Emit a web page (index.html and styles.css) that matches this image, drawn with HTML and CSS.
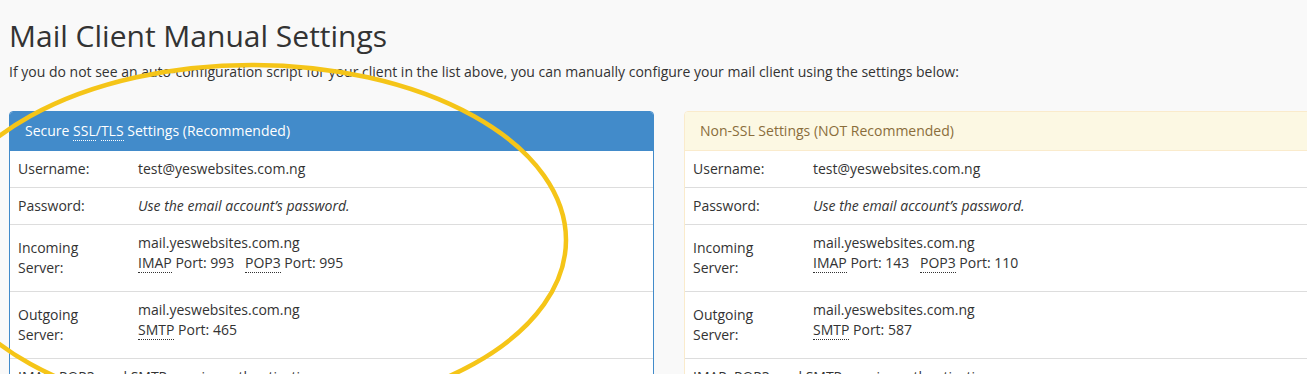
FILE: index.html
```html
<!DOCTYPE html>
<html lang="en">
<head>
    <meta charset="UTF-8">
    <title>Mail Client Manual Settings</title>
    <link rel="stylesheet" href="styles.css">
</head>
<body>
    <div class="page">
        <h1>Mail Client Manual Settings</h1>
        <p class="intro">If you do not see an auto-configuration script for your client in the list above, you can manually configure your mail client using the settings below:</p>

        <div class="panels">
            <!-- SSL panel -->
            <div class="panel panel-primary">
                <div class="panel-heading">Secure <abbr title="Secure Sockets Layer">SSL</abbr>/<abbr title="Transport Layer Security">TLS</abbr> Settings (Recommended)</div>
                <table class="settings">
                    <tr>
                        <td class="label">Username:</td>
                        <td>test@yeswebsites.com.ng</td>
                    </tr>
                    <tr>
                        <td class="label">Password:</td>
                        <td><em>Use the email account’s password.</em></td>
                    </tr>
                    <tr>
                        <td class="label mid">Incoming<br>Server:</td>
                        <td>mail.yeswebsites.com.ng
                            <div class="ports"><abbr>IMAP</abbr> Port: 993 <span class="port-gap"><abbr>POP3</abbr> Port: 995</span></div>
                        </td>
                    </tr>
                    <tr>
                        <td class="label mid">Outgoing<br>Server:</td>
                        <td>mail.yeswebsites.com.ng
                            <div class="ports"><abbr>SMTP</abbr> Port: 465</div>
                        </td>
                    </tr>
                    <tr>
                        <td colspan="2"><abbr>IMAP</abbr>, <abbr>POP3</abbr>, and <abbr>SMTP</abbr> require authentication.</td>
                    </tr>
                </table>
            </div>

            <!-- Non-SSL panel -->
            <div class="panel panel-warning">
                <div class="panel-heading">Non-SSL Settings (NOT Recommended)</div>
                <table class="settings">
                    <tr>
                        <td class="label">Username:</td>
                        <td>test@yeswebsites.com.ng</td>
                    </tr>
                    <tr>
                        <td class="label">Password:</td>
                        <td><em>Use the email account’s password.</em></td>
                    </tr>
                    <tr>
                        <td class="label mid">Incoming<br>Server:</td>
                        <td>mail.yeswebsites.com.ng
                            <div class="ports"><abbr>IMAP</abbr> Port: 143 <span class="port-gap"><abbr>POP3</abbr> Port: 110</span></div>
                        </td>
                    </tr>
                    <tr>
                        <td class="label mid">Outgoing<br>Server:</td>
                        <td>mail.yeswebsites.com.ng
                            <div class="ports"><abbr>SMTP</abbr> Port: 587</div>
                        </td>
                    </tr>
                    <tr>
                        <td colspan="2"><abbr>IMAP</abbr>, <abbr>POP3</abbr>, and <abbr>SMTP</abbr> require authentication.</td>
                    </tr>
                </table>
            </div>
        </div>
    </div>

    <!-- hand drawn highlight -->
    <svg class="highlight" width="1307" height="374" viewBox="0 0 1307 374">
        <ellipse cx="252" cy="240" rx="314" ry="175" fill="none" stroke="#f5c518" stroke-width="4.5"/>
    </svg>
</body>
</html>
```
FILE: styles.css
```css
html, body {
    margin: 0;
    padding: 0;
    overflow: hidden;
}
body {
    background: #f9f9f9;
    color: #333;
    font-family: 'Open Sans', Arial, sans-serif;
    font-size: 14px;
    line-height: 20px;
    position: relative;
    height: 374px;
}
.page {
    padding: 0 0 0 9px;
}
h1 {
    margin: 19px 0 0 0;
    font-size: 30px;
    font-weight: 400;
    line-height: 33px;
    color: #333;
}
.intro {
    margin: 10px 0 29px 0;
}
.panels {
    display: flex;
    gap: 30px;
    width: 1320px;
}
.panel {
    flex: 0 0 645px;
    box-sizing: border-box;
    background: #fff;
    border: 1px solid transparent;
    border-radius: 4px;
}
.panel-heading {
    padding: 9px 15px 9px;
    border-bottom: 1px solid transparent;
    border-radius: 3px 3px 0 0;
}
.panel-primary {
    border-color: #428bca;
}
.panel-primary .panel-heading {
    background: #428bca;
    color: #fff;
    border-color: #428bca;
}
.panel-warning {
    border-color: #faebcc;
}
.panel-warning .panel-heading {
    background: #fcf8e3;
    color: #8a6d3b;
    border-color: #faebcc;
}
abbr {
    text-decoration: none;
    border-bottom: 1px dotted;
    cursor: help;
}
.settings {
    width: 100%;
    border-collapse: collapse;
}
.settings td {
    padding: 8px;
    vertical-align: top;
    border-top: 1px solid #ddd;
}
.settings tr:first-child td {
    border-top: none;
}
.settings td.label {
    width: 104px;
}
.settings td.mid {
    vertical-align: middle;
}
.ports {
    margin-bottom: 10px;
}
.port-gap {
    margin-left: 7px;
}
.highlight {
    position: absolute;
    left: 0;
    top: 0;
    pointer-events: none;
}
```
